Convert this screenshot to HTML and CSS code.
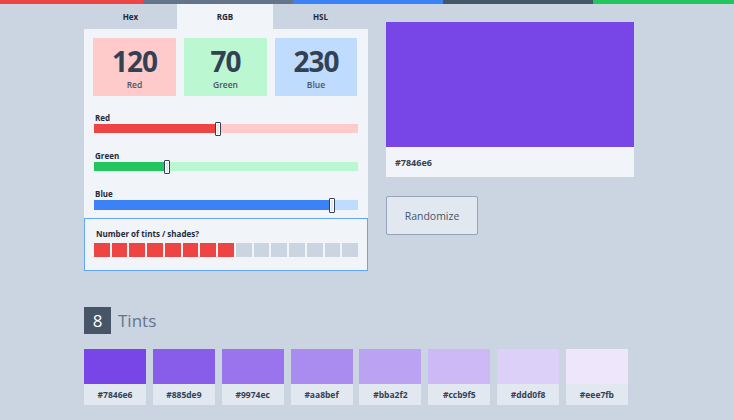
FILE: index.html
```html
<!DOCTYPE html>
<html>
<head>
<meta charset="utf-8">
<link rel="stylesheet" href="styles.css">
</head>
<body>
<div class="topbar">
  <div class="seg red"></div><div class="seg gray"></div><div class="seg blue"></div><div class="seg dark"></div><div class="seg green"></div>
</div>
<div class="main">
  <div class="left">
    <div class="tabs">
      <div class="tab t1">Hex</div>
      <div class="tab t2 active">RGB</div>
      <div class="tab t3">HSL</div>
    </div>
    <div class="panel">
      <div class="boxes">
        <div class="box box-red"><div class="num">120</div><div class="lbl">Red</div></div>
        <div class="box box-green"><div class="num">70</div><div class="lbl">Green</div></div>
        <div class="box box-blue"><div class="num">230</div><div class="lbl">Blue</div></div>
      </div>
      <div class="slider">
        <div class="slabel">Red</div>
        <div class="track track-red"><div class="fill fill-red" style="width:47%"></div><div class="thumb" style="left:47%"></div></div>
      </div>
      <div class="slider">
        <div class="slabel">Green</div>
        <div class="track track-green"><div class="fill fill-green" style="width:27.5%"></div><div class="thumb" style="left:27.5%"></div></div>
      </div>
      <div class="slider">
        <div class="slabel">Blue</div>
        <div class="track track-blue"><div class="fill fill-blue" style="width:90.2%"></div><div class="thumb" style="left:90.2%"></div></div>
      </div>
    </div>
    <div class="count">
      <div class="clabel">Number of tints / shades?</div>
      <div class="squares">
        <div class="sq on"></div><div class="sq on"></div><div class="sq on"></div><div class="sq on"></div>
        <div class="sq on"></div><div class="sq on"></div><div class="sq on"></div><div class="sq on"></div>
        <div class="sq"></div><div class="sq"></div><div class="sq"></div><div class="sq"></div>
        <div class="sq"></div><div class="sq"></div><div class="sq"></div>
      </div>
    </div>
  </div>
  <div class="right">
    <div class="preview">
      <div class="pcolor"></div>
      <div class="phex">#7846e6</div>
    </div>
    <button class="rand">Randomize</button>
  </div>
</div>
<div class="tints">
  <div class="thead"><div class="badge">8</div><div class="ttitle">Tints</div></div>
  <div class="swatches">
    <div class="sw"><div class="swc" style="background:#7846e6"></div><div class="swl">#7846e6</div></div>
    <div class="sw"><div class="swc" style="background:#885de9"></div><div class="swl">#885de9</div></div>
    <div class="sw"><div class="swc" style="background:#9974ec"></div><div class="swl">#9974ec</div></div>
    <div class="sw"><div class="swc" style="background:#aa8bef"></div><div class="swl">#aa8bef</div></div>
    <div class="sw"><div class="swc" style="background:#bba2f2"></div><div class="swl">#bba2f2</div></div>
    <div class="sw"><div class="swc" style="background:#ccb9f5"></div><div class="swl">#ccb9f5</div></div>
    <div class="sw"><div class="swc" style="background:#ddd0f8"></div><div class="swl">#ddd0f8</div></div>
    <div class="sw"><div class="swc" style="background:#eee7fb"></div><div class="swl">#eee7fb</div></div>
  </div>
</div>
</body>
</html>
```
FILE: styles.css
```css
* { box-sizing: border-box; }
html, body { margin: 0; padding: 0; }
body {
  background: #cbd5e1;
  font-family: "Open Sans", "Noto Sans", sans-serif;
  color: #334155;
  width: 734px;
  height: 420px;
  overflow: hidden;
}
.topbar { display: flex; height: 4px; }
.seg { flex: none; }
.red { background: #ef4444; width: 143px; }
.gray { background: #64748b; width: 150px; }
.blue { background: #3b82f6; width: 150px; }
.dark { background: #475569; width: 150px; }
.green { background: #22c55e; flex: 1; }

.main { display: flex; padding-left: 84px; gap: 18px; }
.left { width: 284px; }
.tabs { display: flex; height: 25px; }
.tab {
  display: flex; align-items: center; justify-content: center;
  font-size: 8px; font-weight: 700; color: #1e293b;
}
.t1 { width: 93px; }
.t2 { width: 96px; }
.t3 { width: 95px; }
.tab.active { background: #f1f5f9; }

.panel { background: #f1f5f9; padding: 9px 10px 8px 9px; }
.boxes { display: grid; grid-template-columns: 83px 83px 82px; gap: 8px; }
.box {
  height: 58px; text-align: center;
  padding-top: 7.5px;
}
.box-red { background: #fecaca; }
.box-green { background: #bbf7d0; }
.box-blue { background: #bfdbfe; }
.num { font-size: 28px; font-weight: 700; line-height: 30px; color: #334155; letter-spacing: -1px; }
.lbl { font-size: 8.5px; font-weight: 600; color: #475569; line-height: 12px; margin-top: 3.5px; }

.slider { padding-top: 17px; }
.boxes + .slider { padding-top: 16px; }
.slabel { font-size: 8px; font-weight: 700; color: #1e293b; line-height: 11px; padding-left: 2px; margin-bottom: 1px; }
.track { position: relative; height: 9px; margin-left: 1px; }
.track-red { background: #fecaca; }
.track-green { background: #bbf7d0; }
.track-blue { background: #bfdbfe; height: 10px; }
.fill { height: 100%; }
.fill-red { background: #ef4444; }
.fill-green { background: #22c55e; }
.fill-blue { background: #3b82f6; }
.thumb {
  position: absolute; top: -2px; margin-left: -3px; width: 6px; height: 14px;
  background: #e2e8f0; border: 1.5px solid #334155; border-radius: 1px;
  box-shadow: inset 0 0 0 1px #ffffff;
}
.track-blue .thumb { height: 15px; }

.count {
  border: 1px solid #60a5fa; background: #f1f5f9;
  padding: 9px 9px 12px 9px; height: 53px;
}
.clabel { font-size: 8px; font-weight: 700; color: #1e293b; line-height: 11px; margin-bottom: 4px; padding-left: 2px; }
.squares { display: flex; gap: 2px; }
.sq { flex: 1; height: 14px; background: #cbd5e1; }
.sq.on { background: #ef4444; }

.right { width: 248px; padding-top: 18px; }
.pcolor { height: 125px; background: #7846e6; }
.phex { height: 30px; background: #f1f5f9; font-size: 9px; font-weight: 700; color: #334155; padding-left: 9px; display: flex; align-items: center; }
.rand {
  margin-top: 19px; width: 92px; height: 39px;
  background: #e2e8f0; border: 1px solid #94a3b8; border-radius: 2px;
  font-family: inherit; font-size: 10.5px; color: #475569;
}

.tints { padding-left: 84px; padding-top: 36px; }
.thead { display: flex; align-items: center; gap: 7px; }
.badge {
  width: 27px; height: 27px; background: #475569; color: #ffffff;
  font-size: 17px; display: flex; align-items: center; justify-content: center;
}
.ttitle { font-size: 17px; color: #64748b; }
.swatches { display: flex; gap: 6.85px; margin-top: 15px; }
.sw { width: 62px; }
.swc { height: 35px; }
.swl { height: 21px; background: #e2e8f0; font-size: 8.5px; font-weight: 700; color: #334155; display: flex; align-items: center; justify-content: center; }
```
